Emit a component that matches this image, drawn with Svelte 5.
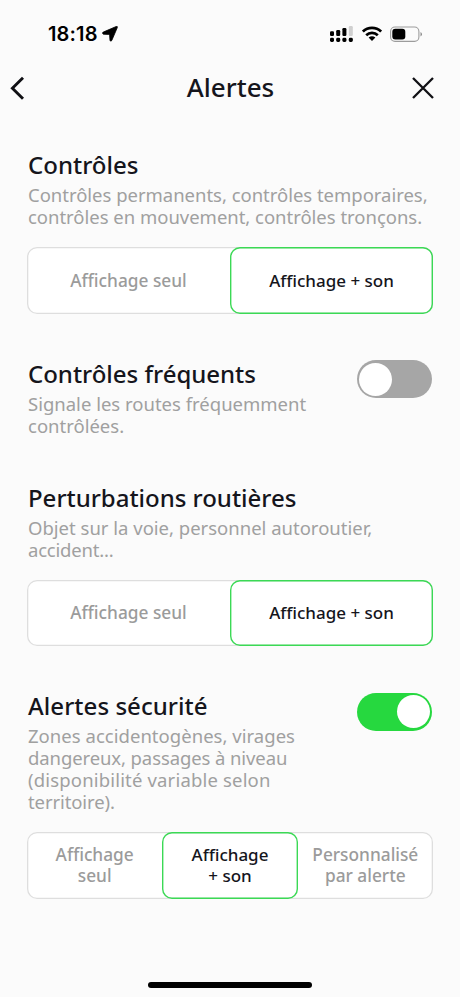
<script>
  let sections = $state([
    {
      title: "Contrôles",
      track: 0,
      lines: [
        { text: "Contrôles permanents, contrôles temporaires,", track: -0.02 },
        { text: "contrôles en mouvement, contrôles tronçons.", track: -0.02 },
      ],
      options: [["Affichage seul"], ["Affichage + son"]],
      selected: 1,
    },
    {
      title: "Contrôles fréquents",
      track: -0.02,
      lines: [
        { text: "Signale les routes fréquemment", track: 0 },
        { text: "contrôlées.", track: 0 },
      ],
      toggle: true,
      on: false,
    },
    {
      title: "Perturbations routières",
      track: -0.02,
      lines: [
        { text: "Objet sur la voie, personnel autoroutier,", track: 0 },
        { text: "accident...", track: -0.2 },
      ],
      options: [["Affichage seul"], ["Affichage + son"]],
      selected: 1,
    },
    {
      title: "Alertes sécurité",
      track: 0.05,
      lines: [
        { text: "Zones accidentogènes, virages", track: 0.03 },
        { text: "dangereux, passages à niveau", track: -0.1 },
        { text: "(disponibilité variable selon", track: 0.17 },
        { text: "territoire).", track: -0.1 },
      ],
      toggle: true,
      on: true,
      options: [
        ["Affichage", "seul"],
        ["Affichage", "+ son"],
        ["Personnalisé", "par alerte"],
      ],
      selected: 1,
    },
  ])
</script>

<div class="screen">
  <div class="status">
    <div class="clock">
      <span>18:18</span>
      <svg width="16" height="16" viewBox="0 0 16 16">
        <path d="M14.2 .5Q15.8 0 15.3 1.6L9.8 14.4Q8.6 16 8 14.4L7.6 9.2Q7.5 8.5 6.8 8.4L1.4 8.2Q-.4 7.4 1.2 6.1Z" stroke="#000" stroke-width=".8" />
      </svg>
    </div>
    <div class="indicators">
      <svg width="24" height="17" viewBox="0 0 24 17">
        <rect x="0" y="5.3" width="4" height="4.6" rx="1.2" />
        <rect x="6.2" y="4" width="4" height="5.9" rx="1.2" />
        <rect x="12.4" y="2" width="4" height="7.9" rx="1.2" />
        <rect x="18.8" y="0" width="4" height="9.9" rx="1.2" fill="#d0d0d0" />
        <rect x="0" y="11.8" width="4" height="4.2" rx="1.4" />
        <rect x="6.2" y="11.8" width="4" height="4.2" rx="1.4" />
        <rect x="12.4" y="11.8" width="4" height="4.2" rx="1.4" />
        <rect x="18.8" y="11.8" width="4" height="4.2" rx="1.4" />
      </svg>
      <svg width="20" height="16" viewBox="0 0 20 16" fill="none" stroke="#000" stroke-width="2.7">
        <path d="M.9 5.6A13 13 0 0 1 19.1 5.6" />
        <path d="M4.2 9.2A8.4 8.4 0 0 1 15.8 9.2" />
        <path d="M6.6 11.5Q10 8.9 13.4 11.5L10 15Z" fill="#000" stroke="none" />
      </svg>
      <svg width="33" height="17" viewBox="0 0 33 17">
        <rect x=".6" y="1" width="28.3" height="14.4" rx="4.4" fill="none" stroke="#9c9c9c" stroke-width="1.1" />
        <rect x="2.3" y="2.8" width="13" height="10.8" rx="3" />
        <path d="M30.5 6v4.6Q32 9.8 32 8.3T30.5 6Z" fill="#8c8c8c" />
      </svg>
    </div>
  </div>

  <header>
    <button class="icon" aria-label="Retour">
      <svg width="16" height="24" viewBox="0 0 16 24">
        <path d="M14 1.8L3.4 12.3L14 22.8" fill="none" stroke="#101014" stroke-width="2.9" />
      </svg>
    </button>
    <h1>Alertes</h1>
    <button class="icon" aria-label="Fermer">
      <svg width="22" height="22" viewBox="0 0 22 22">
        <path d="M1 1L21 21M21 1L1 21" fill="none" stroke="#101014" stroke-width="2.3" />
      </svg>
    </button>
  </header>

  <main>
    {#each sections as section}
      <section class:plain={!section.options}>
        <div class="head">
          <div class="copy">
            <h2><span style="letter-spacing: {section.track}px">{section.title}</span></h2>
            {#each section.lines as line}
              <p><span style="letter-spacing: {line.track}px">{line.text}</span></p>
            {/each}
          </div>
          {#if section.toggle}
            <button
              class="switch"
              class:on={section.on}
              role="switch"
              aria-checked={section.on}
              aria-label={section.title}
              onclick={() => (section.on = !section.on)}
            >
              <span class="knob"></span>
            </button>
          {/if}
        </div>
        {#if section.options}
          <div class="segments">
            {#each section.options as option, i}
              <button
                class:selected={section.selected === i}
                onclick={() => (section.selected = i)}
              >
                {#each option as row}
                  <span>{row}</span>
                {/each}
              </button>
            {/each}
          </div>
        {/if}
      </section>
    {/each}
  </main>

  <div class="home"></div>
</div>

<style>
  :global(body) {
    background: #fbfbfb;
  }
  .screen {
    box-sizing: border-box;
    width: 460px;
    height: 997px;
    display: flex;
    flex-direction: column;
    background: #fbfbfb;
    color: #15151c;
    font-family: "Noto Sans", sans-serif;
    overflow: hidden;
  }
  button {
    margin: 0;
    padding: 0;
    border: 0;
    background: none;
    font: inherit;
    color: inherit;
  }
  svg {
    display: block;
  }
  .status {
    height: 36px;
    padding: 16px 37.5px 0 48px;
    display: flex;
    justify-content: space-between;
    align-items: center;
    color: #000;
  }
  .clock {
    display: flex;
    align-items: center;
    gap: 4px;
    font: 600 20px/24px Inter, sans-serif;
    letter-spacing: 0.15px;
  }
  .indicators {
    display: flex;
    align-items: center;
    gap: 8px;
  }
  header {
    height: 72px;
    padding: 0 26px 0 9px;
    display: grid;
    grid-template-columns: 40px 1fr 22px;
    align-items: center;
  }
  h1 {
    margin: 0 0 2px;
    font-size: 26px;
    font-weight: 500;
    line-height: 32px;
    text-align: center;
  }
  main {
    flex: 1;
    padding: 27px 28px 0;
    display: flex;
    flex-direction: column;
    gap: 46px;
  }
  .plain {
    padding-bottom: 1px;
  }
  .head {
    display: flex;
    justify-content: space-between;
  }
  h2 {
    margin: 0 0 5px;
    font-size: 24px;
    font-weight: 500;
    line-height: 28px;
    white-space: nowrap;
  }
  p {
    margin: 0;
    font-size: 18.5px;
    font-weight: 400;
    line-height: 22px;
    color: #a0a0a0;
    white-space: nowrap;
  }
  .switch {
    box-sizing: border-box;
    width: 75px;
    height: 38px;
    margin-top: 0.5px;
    padding: 2px;
    border-radius: 19px;
    background: #a6a6a6;
    display: flex;
    align-items: center;
  }
  .switch.on {
    background: #26d83f;
    justify-content: flex-end;
  }
  .knob {
    width: 33px;
    height: 33px;
    border-radius: 50%;
    background: #fff;
  }
  .segments {
    box-sizing: border-box;
    height: 66.5px;
    margin: 19px -1px 0;
    display: flex;
    border-radius: 10px;
    background: #fff;
    box-shadow: inset 0 0 0 1.3px #dedede;
  }
  .segments button {
    flex: 1;
    padding-bottom: 0.5px;
    display: flex;
    flex-direction: column;
    align-items: center;
    justify-content: center;
    border-radius: 10px;
    font-size: 17.3px;
    font-weight: 500;
    line-height: 21px;
    color: #9b9b9b;
    white-space: nowrap;
  }
  .segments button.selected {
    color: #15151c;
    font-size: 17px;
    box-shadow: inset 0 0 0 1.4px #3bd955;
  }
  .home {
    width: 164px;
    height: 6px;
    margin: 0 auto 9px;
    border-radius: 3px;
    background: #000;
  }
</style>
